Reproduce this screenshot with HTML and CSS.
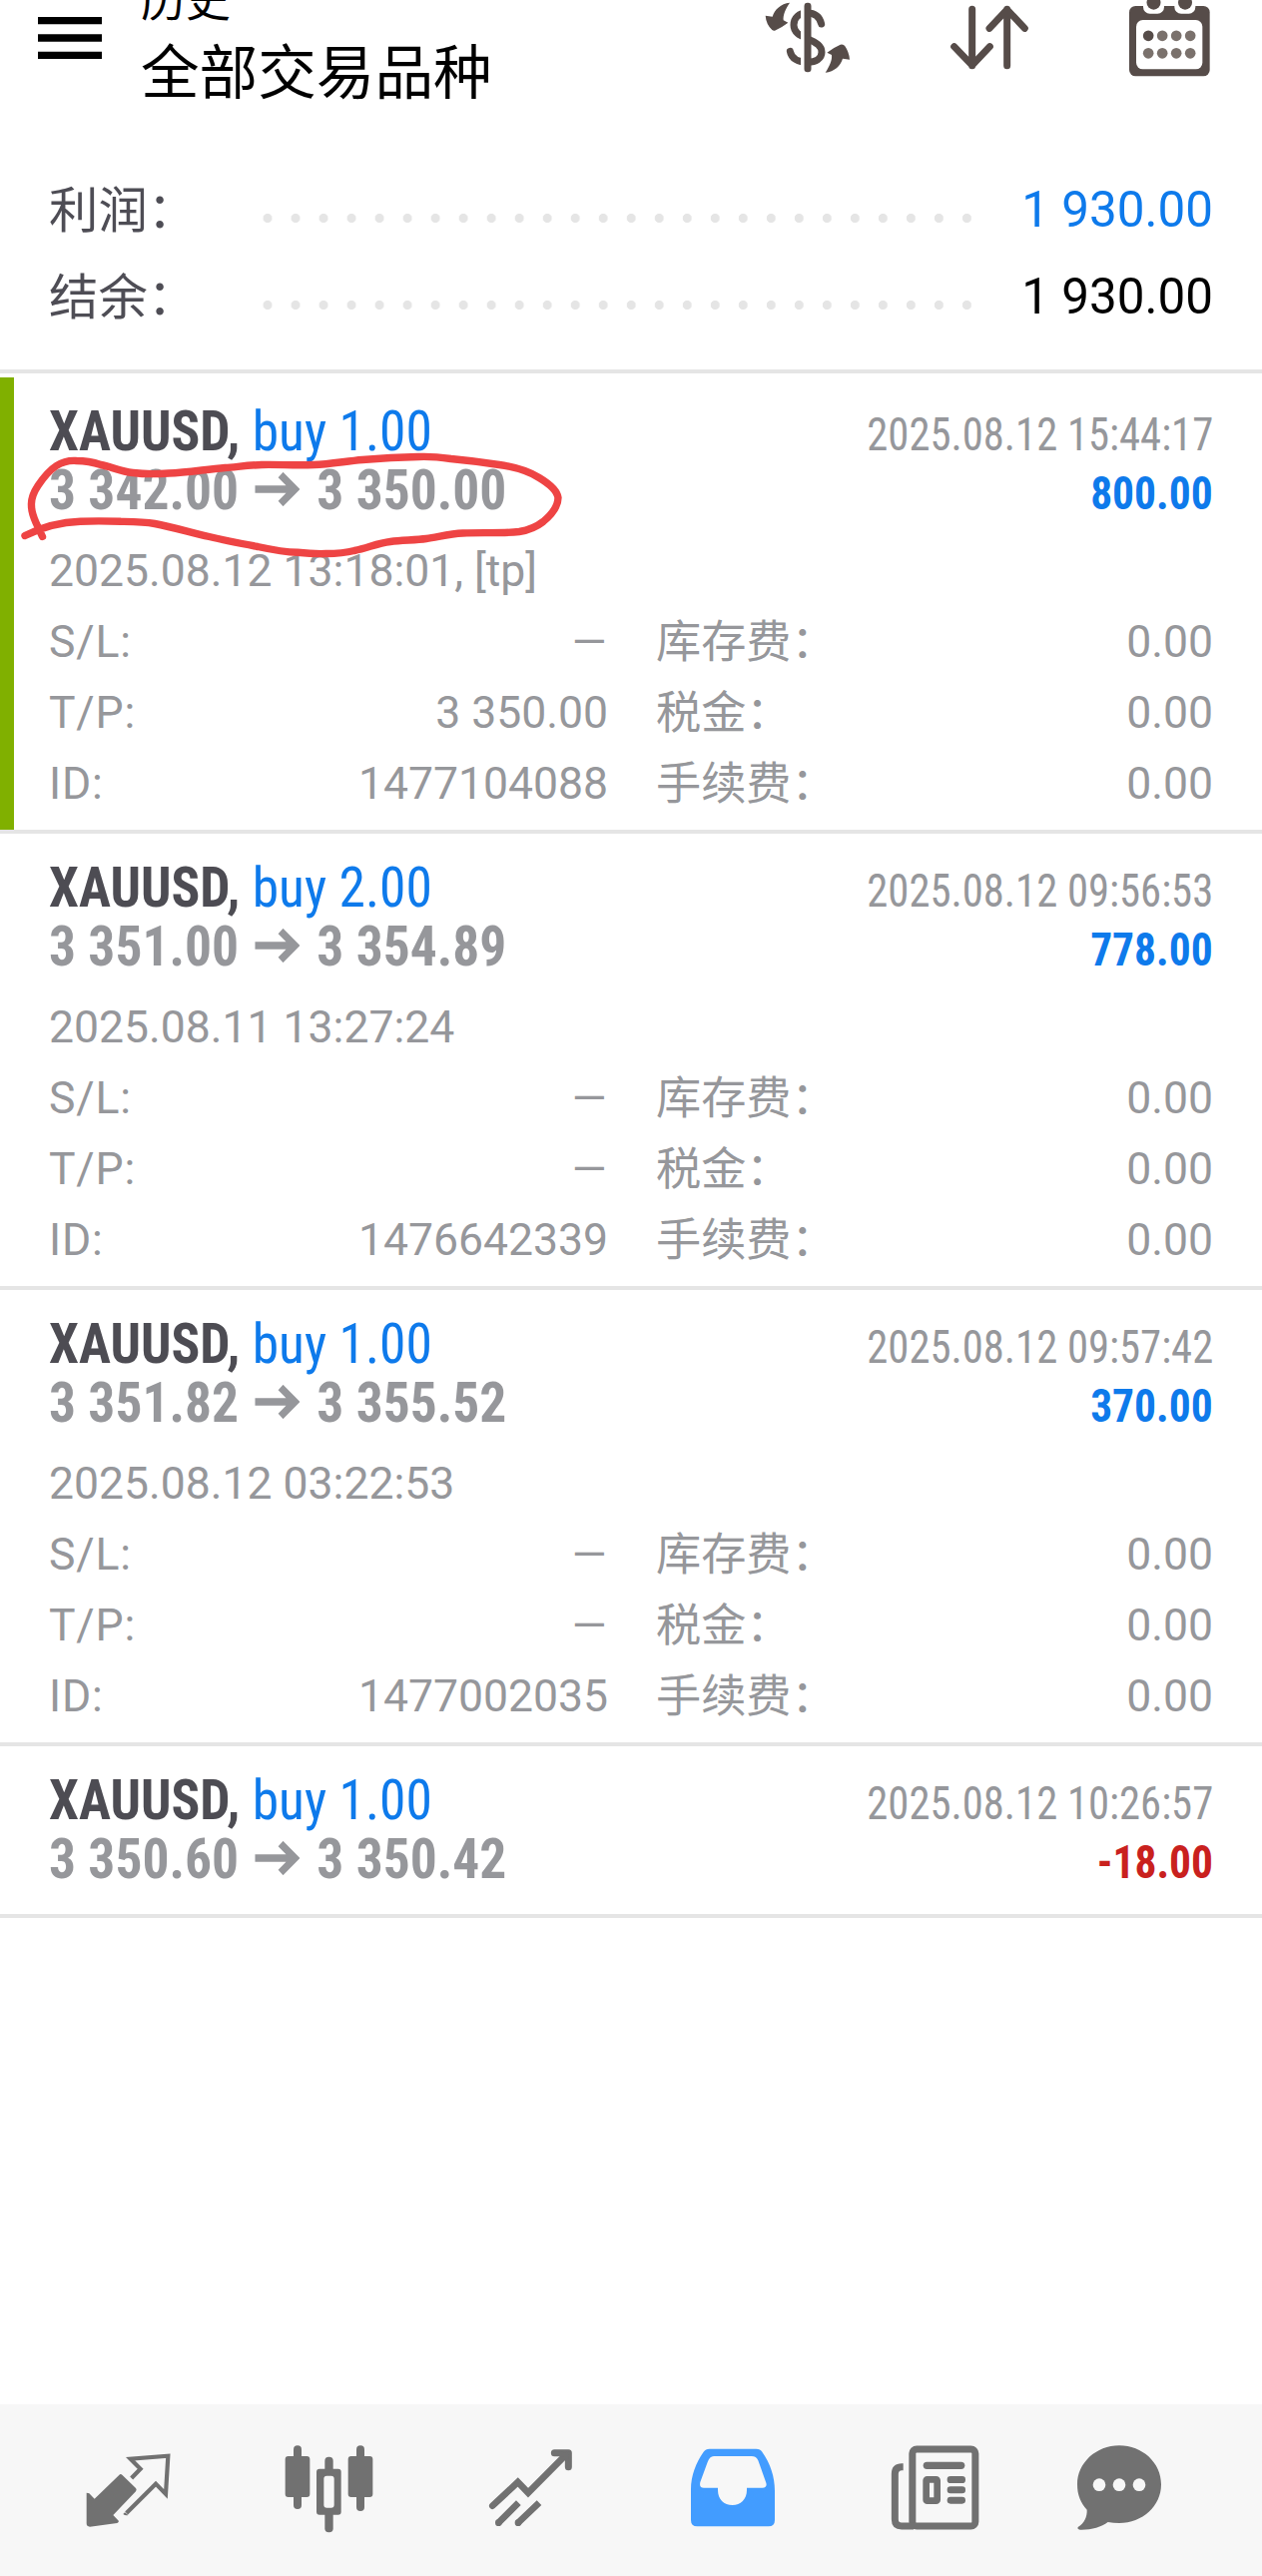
FILE: index.html
```html
<!DOCTYPE html>
<html lang="zh-CN">
<head>
<meta charset="utf-8">
<title>历史</title>
<link rel="stylesheet" href="styles.css">
</head>
<body>
<div class="app">
  <header class="header">
    <svg class="menu" viewBox="0 0 64 42"><path d="M0 3.5H64M0 21H64M0 38.5H64" stroke="#000" stroke-width="7.4"/></svg>
    <div class="titles">
      <div class="subtitle">历史</div>
      <h1 class="title">全部交易品种</h1>
    </div>
    <div class="actions">
      <svg class="action" viewBox="57 0 300 240">
        <path d="M248 72C243 50 228 39 205 39C181 39 165 53 165 75C165 97 182 106 205 116C234 128 249 138 249 157C249 176 232 187 207 187C178 187 158 176 154 154" fill="none" stroke="#564c49" stroke-width="21" stroke-linecap="round"/>
        <rect x="186" y="16" width="14" height="190" fill="#fff"/>
        <rect x="196.500" y="8" width="21" height="209" rx="10" fill="#564c49"/>
        <g fill="#564c49">
          <path d="M153 8C141 26 132 45 134 61L148 68Q127 84 108 92Q104 93 100 90Q82 73 80 47L101 50C108 28 126 11 153 8Z"/>
          <path d="M260 218C272 200 281 181 279 165L265 158Q286 142 305 134Q315 132 319 139Q331 156 333 179L312 176C305 198 287 215 260 218Z"/>
        </g>
      </svg>
      <svg class="action" viewBox="600 0 300 240">
        <path d="M701 28V197M647 140L701 196L754 140M806 197V28M753 85L806 29L859 85" fill="none" stroke="#564c49" stroke-width="21" stroke-linecap="round" stroke-linejoin="round"/>
      </svg>
      <svg class="action" viewBox="1143 0 300 240">
        <rect x="1173" y="18" width="242" height="211" rx="19" fill="#564c49"/>
        <rect x="1194" y="60" width="199" height="148" rx="20" fill="#fff"/>
        <rect x="1215" y="-20" width="63" height="61" rx="20" fill="#fff"/>
        <rect x="1309" y="-20" width="63" height="61" rx="20" fill="#fff"/>
        <circle cx="1246.500" cy="8" r="21" fill="#564c49"/><circle cx="1341" cy="8" r="21" fill="#564c49"/>
        <circle cx="1230.500" cy="107.500" r="16" fill="#564c49"/>
        <g fill="#7a716c"><circle cx="1272.500" cy="107.500" r="16"/><circle cx="1314.500" cy="107.500" r="16"/><circle cx="1356.500" cy="107.500" r="16"/><circle cx="1230.500" cy="160" r="16"/><circle cx="1272.500" cy="160" r="16"/><circle cx="1314.500" cy="160" r="16"/><circle cx="1356.500" cy="160" r="16"/></g>
      </svg>
    </div>
  </header>

  <section class="summary">
    <div class="sum-row"><span class="sum-label">利润：</span><span class="dots"></span><span class="sum-value blue">1 930.00</span></div>
    <div class="sum-row"><span class="sum-label">结余：</span><span class="dots"></span><span class="sum-value">1 930.00</span></div>
  </section>

  <main class="deals">
    <article class="deal marked">
      <div class="line"><div class="narrow"><b class="symbol">XAUUSD,</b> <span class="blue">buy 1.00</span></div><time class="closed">2025.08.12 15:44:17</time></div>
      <div class="line"><div class="narrow prices">3 342.00<svg class="arrow" viewBox="0 0 47 34"><path d="M0 17H40M27 2.500L42 17L27 31.500" fill="none" stroke="#96979b" stroke-width="7.400"/></svg>3 350.00</div><b class="profit blue">800.00</b></div>
      <div class="details">
        <div class="opened">2025.08.12 13:18:01, [tp]</div>
        <div class="cell"><span class="key">S/L:</span><span class="dash">—</span></div><div class="cell"><span class="fee">库存费：</span><span>0.00</span></div>
        <div class="cell"><span class="key">T/P:</span><span>3 350.00</span></div><div class="cell"><span class="fee">税金：</span><span>0.00</span></div>
        <div class="cell"><span class="key">ID:</span><span>1477104088</span></div><div class="cell"><span class="fee">手续费：</span><span>0.00</span></div>
      </div>
      <svg class="scribble" viewBox="0 0 1264 453"><path transform="translate(0 -378)" d="M25 536.500C42 528 60 523 80.500 522.300C95 521.500 108 521.800 121 522.300C134 522.500 144 522.500 155 524.500C173 528 190 533 209.500 537.500C226 541.500 242 544.500 258 547.500C272 550.500 285 553 298 553.300C308 554.300 317 554.800 326.500 554.500C338 554.500 347 553.500 355 551.500C368 549 378 544 391 542.500C403 541 416 541 427 539.500C440 537.500 451 534.500 463.500 534C483 533 503 534.500 520 532.500C530 531 537 528 544 522.500C553 515 559 507 559 498.500C558 491 550 484.500 540 478.500C528 471 514 467.500 500 465.500C484 463 468 461 451.500 459.500C441 458 430 457 419 457.500C400 458 382 459 363 460.500C346 462 330 465 314.500 465.500C297 466.500 279 465 262 465.500C249 466 238 467.500 225.500 468.500C206 470 188 473.500 169 474C156 475 145 475 133 473.500C121 472 111 467.500 101 465.500C92 462.500 85 461.500 76.500 461.500C69 461 62 463 56.500 466.500C48 472 43 479 38 486.500C33 494 31 500 31.500 506.500C31.500 513 34 519 36 523.500Q39 530 42.500 537.500"/></svg>
    </article>

    <article class="deal">
      <div class="line"><div class="narrow"><b class="symbol">XAUUSD,</b> <span class="blue">buy 2.00</span></div><time class="closed">2025.08.12 09:56:53</time></div>
      <div class="line"><div class="narrow prices">3 351.00<svg class="arrow" viewBox="0 0 47 34"><path d="M0 17H40M27 2.500L42 17L27 31.500" fill="none" stroke="#96979b" stroke-width="7.400"/></svg>3 354.89</div><b class="profit blue">778.00</b></div>
      <div class="details">
        <div class="opened">2025.08.11 13:27:24</div>
        <div class="cell"><span class="key">S/L:</span><span class="dash">—</span></div><div class="cell"><span class="fee">库存费：</span><span>0.00</span></div>
        <div class="cell"><span class="key">T/P:</span><span class="dash">—</span></div><div class="cell"><span class="fee">税金：</span><span>0.00</span></div>
        <div class="cell"><span class="key">ID:</span><span>1476642339</span></div><div class="cell"><span class="fee">手续费：</span><span>0.00</span></div>
      </div>
    </article>

    <article class="deal">
      <div class="line"><div class="narrow"><b class="symbol">XAUUSD,</b> <span class="blue">buy 1.00</span></div><time class="closed">2025.08.12 09:57:42</time></div>
      <div class="line"><div class="narrow prices">3 351.82<svg class="arrow" viewBox="0 0 47 34"><path d="M0 17H40M27 2.500L42 17L27 31.500" fill="none" stroke="#96979b" stroke-width="7.400"/></svg>3 355.52</div><b class="profit blue">370.00</b></div>
      <div class="details">
        <div class="opened">2025.08.12 03:22:53</div>
        <div class="cell"><span class="key">S/L:</span><span class="dash">—</span></div><div class="cell"><span class="fee">库存费：</span><span>0.00</span></div>
        <div class="cell"><span class="key">T/P:</span><span class="dash">—</span></div><div class="cell"><span class="fee">税金：</span><span>0.00</span></div>
        <div class="cell"><span class="key">ID:</span><span>1477002035</span></div><div class="cell"><span class="fee">手续费：</span><span>0.00</span></div>
      </div>
    </article>

    <article class="deal compact">
      <div class="line"><div class="narrow"><b class="symbol">XAUUSD,</b> <span class="blue">buy 1.00</span></div><time class="closed">2025.08.12 10:26:57</time></div>
      <div class="line"><div class="narrow prices">3 350.60<svg class="arrow" viewBox="0 0 47 34"><path d="M0 17H40M27 2.500L42 17L27 31.500" fill="none" stroke="#96979b" stroke-width="7.400"/></svg>3 350.42</div><b class="profit red">-18.00</b></div>
    </article>
  </main>

  <nav class="tabs">
    <a class="tab"><svg viewBox="27 48 288 288">
      <path d="M150 145Q153 143 157 146L198 186Q202 190 198 196L130 267L147 285Q146 290 142 291L60 302Q50 302 50 292V200Q55 200 58 202L74 218Z" fill="#717171"/>
      <path d="M185 156L212 128L182 98L295 89L288 204L258 173L170 261" fill="none" stroke="#717171" stroke-width="12.500"/>
      <path d="M165 259L175 267Q166 269 160 264Z" fill="#717171"/>
    </svg></a>
    <a class="tab"><svg viewBox="633 48 288 288">
      <g fill="#717171"><rect x="672" y="58" width="24" height="191" rx="12"/><rect x="647" y="90" width="74" height="123" rx="9"/><rect x="861" y="58" width="24" height="197" rx="12"/><rect x="836" y="90" width="74" height="123" rx="9"/><rect x="766" y="92" width="25" height="227" rx="12"/><rect x="741" y="128" width="74" height="138" rx="9"/></g>
      <rect x="763" y="149" width="31" height="96" rx="9" fill="#f7f7f7"/>
    </svg></a>
    <a class="tab"><svg viewBox="39 48 288 288">
      <path d="M70 239L146 168L177 200L288 88" fill="none" stroke="#717171" stroke-width="20" stroke-linecap="round"/>
      <path d="M256 80H298V122" fill="none" stroke="#717171" stroke-width="21" stroke-linecap="round" stroke-linejoin="round"/>
      <path d="M277 82L300 78L298 106Z" fill="#717171"/>
      <path d="M88 290L148 230M147 290L210 230" stroke="#717171" stroke-width="20"/>
      <circle cx="88" cy="290" r="10" fill="#717171"/><circle cx="147" cy="290" r="10" fill="#717171"/>
    </svg></a>
    <a class="tab active"><svg viewBox="645 48 288 288">
      <path d="M722 68H862Q875 68 880 77C905 112 918 152 918 194V282Q918 301 899 301H685Q666 301 666 282V190C666 148 682 108 704 77Q710 68 722 68Z" fill="#429cff"/>
      <path d="M735 90H848Q863 90 868 103L892 170Q896 185 881 185H834V192C834 220 815 237 791 237C765 237 747 219 747 192V185H705Q690 185 694 168L716 108Q722 90 735 90Z" fill="#f7f7f7"/>
    </svg></a>
    <a class="tab"><svg viewBox="51 48 288 288">
      <rect x="131.500" y="69" width="189" height="231" rx="13" fill="none" stroke="#717171" stroke-width="21"/>
      <path d="M104 122H100Q79 122 79 143V280Q79 300 99 300H135" fill="none" stroke="#717171" stroke-width="21"/>
      <g fill="#717171"><rect x="164" y="107" width="125" height="22" rx="11"/><rect x="236" y="150" width="55" height="21" rx="10"/><rect x="236" y="181" width="55" height="21" rx="10"/><rect x="236" y="212" width="55" height="21" rx="10"/></g>
      <rect x="173" y="160" width="33" height="64" rx="3" fill="none" stroke="#717171" stroke-width="20"/>
    </svg></a>
    <a class="tab"><svg viewBox="657 48 288 288">
      <path d="M753 58C823 58 879 110 879 175C879 240 823 291 753 291Q735 291 719 288C699 303 668 312 635 311Q626 310 629 303C648 291 657 272 656 251C637 231 627 206 627 175C627 110 684 58 753 58Z" fill="#717171"/>
      <circle cx="693" cy="176" r="19" fill="#f7f7f7"/><circle cx="753" cy="176" r="19" fill="#f7f7f7"/><circle cx="813" cy="176" r="19" fill="#f7f7f7"/>
    </svg></a>
  </nav>
</div>
</body>
</html>
```
FILE: styles.css
```css
* { box-sizing: border-box; }

body {
  margin: 0;
  background: #fff;
  font-family: Roboto, "Noto Sans CJK SC", sans-serif;
  color: #000;
}

.app {
  display: flex;
  flex-direction: column;
  width: 1264px;
  height: 2580px;
  overflow: hidden;
}

.header {
  display: flex;
  align-items: flex-start;
  height: 166px;
  padding: 0 43px 0 38px;
  overflow: hidden;
  flex: none;
}
.menu { width: 64px; height: 42px; margin-top: 17px; }
.titles { margin: -34px 0 0 39px; }
.subtitle { font-size: 45px; line-height: 72px; }
.title { margin: 0; font-size: 58.6px; font-weight: 400; line-height: 72px; }
.actions { display: flex; gap: 81px; margin-left: auto; }
.action { width: 100px; height: 80px; }

.summary {
  flex: none;
  height: 208px;
  padding: 1px 49px 0 49px;
  border-bottom: 4px solid #e5e5e5;
}
.sum-row {
  display: flex;
  align-items: baseline;
  height: 87px;
  font-size: 49.4px;
  line-height: 87px;
  white-space: nowrap;
}
.sum-label { width: 205px; color: #4e4d55; transform: translateY(1px); }
.dots {
  width: 729px;
  height: 9px;
  transform: translateY(-4px);
  background: radial-gradient(circle at 14px 4.5px, #e5e5e5 4.2px, transparent 4.9px) 0 0 / 28.02px 9px repeat-x;
}
.sum-value { margin-left: auto; }

.blue { color: #0e7aeb; }
.red { color: #c9211e; }

.deals { padding-top: 4px; flex: 1; }
.deal {
  position: relative;
  height: 457px;
  padding: 24.5px 49px 0 49px;
  border-bottom: 4px solid #e5e5e5;
  color: #96979b;
}
.deal.compact { height: 172px; }
.marked { box-shadow: inset 14px 0 #80b000; }

.line {
  display: flex;
  justify-content: space-between;
  align-items: baseline;
  height: 59.5px;
  line-height: 59.5px;
  white-space: nowrap;
}
.narrow {
  font-size: 56px;
  font-stretch: condensed;
  transform: scaleX(.955);
  transform-origin: left;
}
.symbol { color: #4d4c53; }
.prices { font-weight: 700; }
.arrow { width: 47px; height: 34px; margin: 0 18px 0 17px; vertical-align: 3px; }
.closed, .profit {
  font-size: 46px;
  font-stretch: condensed;
  transform: scaleX(.927);
  transform-origin: right;
}
.profit { transform: scaleX(.945); }

.details {
  display: grid;
  grid-template-columns: 560px 558px;
  column-gap: 48px;
  margin-top: 15.5px;
  font-size: 44.5px;
  line-height: 71px;
  white-space: nowrap;
}
.opened { grid-column: 1 / -1; }
.cell { display: flex; justify-content: space-between; height: 71px; }
.key { letter-spacing: .8px; }
.fee { font-size: 45.2px; }
.dash { margin-right: 1.5px; }

.scribble {
  position: absolute;
  left: 0;
  top: 0;
  width: 1264px;
  height: 453px;
  fill: none;
  stroke: #ee4444;
  stroke-width: 7.4px;
  stroke-linecap: round;
}

.tabs {
  flex: none;
  display: grid;
  grid-template-columns: repeat(6, 202px);
  justify-content: center;
  height: 172px;
  background: #f7f7f7;
}
.tab { display: flex; align-items: center; justify-content: center; }
.tab svg { width: 96px; height: 96px; overflow: visible; }
```
